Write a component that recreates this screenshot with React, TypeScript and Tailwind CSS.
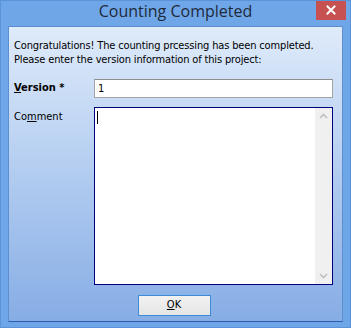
import React from "react";

export default function App() {
  const ui = {
    fontFamily: "'DejaVu Sans Condensed', 'DejaVu Sans', sans-serif",
    fontStretch: "condensed",
  } as React.CSSProperties;
  return (
    <div className="w-[351px] h-[328px] bg-[#6ea6e8] flex flex-col overflow-hidden relative border border-[#5b93d8]">
      <div className="h-[25px] shrink-0 flex items-center justify-center relative">
        <span className="text-[16px] text-[#1f2a3a] leading-none mb-[6px]" style={{ fontFamily: "'Open Sans', 'Noto Sans', sans-serif" }}>
          Counting Completed
        </span>
        <div className="absolute right-[4px] top-[-1px] w-[30px] h-[20px] bg-[#c75050] flex items-center justify-center">
          <svg width="10" height="10" viewBox="0 0 10 10">
            <path d="M1.5 1.5 L8.5 8.5 M8.5 1.5 L1.5 8.5" stroke="white" strokeWidth="2" strokeLinecap="square" />
          </svg>
        </div>
      </div>
      <div className="flex-1 flex px-[7px] pb-[5px] min-h-0">
        <div
          className="w-[335px] flex flex-col border border-[#5b8fd0] border-b-[#2a5fb0] bg-gradient-to-b from-[#dfebfa] to-[#86ade5] pl-[5px] pt-[12px]"
          style={ui}
        >
          <div className="text-[11px] leading-[14px] text-black whitespace-nowrap tracking-[-0.15px]">
            <div>Congratulations! The counting prcessing has been completed.</div>
            <div>Please enter the version information of this project:</div>
          </div>
          <div className="flex items-center mt-[12px] h-[19px] shrink-0">
            <div className="w-[80px] text-[11px] font-bold text-black">
              <span className="underline">V</span>ersion *
            </div>
            <div className="w-[239px] h-[19px] bg-white border border-[#a3a3a3] border-t-[#8e8e8e] text-[11px] leading-[17px] pl-[3px] text-black">
              1
            </div>
          </div>
          <div className="flex mt-[9px] shrink-0">
            <div className="w-[80px] text-[11px] text-black pt-[2px]">
              Co<span className="underline">m</span>ment
            </div>
            <div className="w-[239px] h-[178px] bg-white border border-[#00007f] flex">
              <div className="flex-1 relative">
                <div className="absolute left-[2px] top-[3px] w-[1px] h-[13px] bg-black" />
              </div>
              <div className="w-[17px] bg-[#f0f0f0] flex flex-col items-center justify-between py-[5px]">
                <svg width="9" height="6" viewBox="0 0 9 6">
                  <path d="M1 5 L4.5 1.5 L8 5" stroke="#c0c0c0" strokeWidth="1.6" fill="none" />
                </svg>
                <svg width="9" height="6" viewBox="0 0 9 6">
                  <path d="M1 1 L4.5 4.5 L8 1" stroke="#c0c0c0" strokeWidth="1.6" fill="none" />
                </svg>
              </div>
            </div>
          </div>
          <div className="flex justify-center w-[319px] mt-[10px] shrink-0">
            <button className="w-[73px] h-[21px] border border-[#3c8ad8] bg-gradient-to-b from-[#f2f2f2] to-[#e5e5e5] text-[11px] text-black flex items-center justify-center mr-[-1px]">
              <span className="underline">O</span>K
            </button>
          </div>
        </div>
      </div>
    </div>
  );
}
